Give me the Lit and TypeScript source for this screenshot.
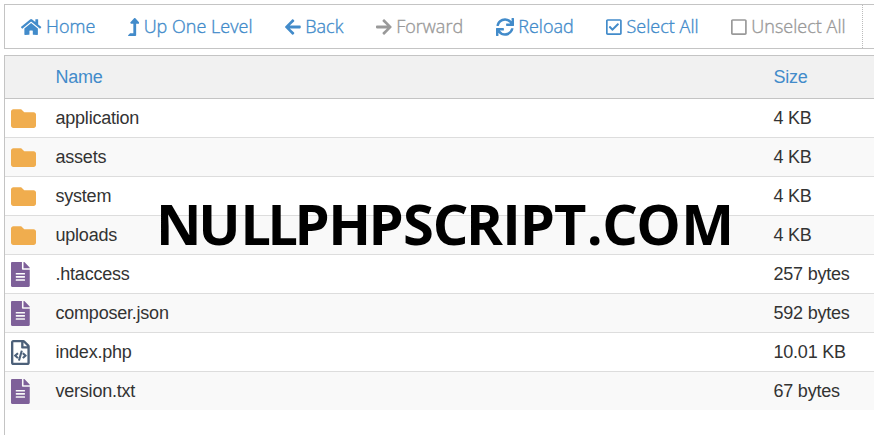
import { LitElement, html, svg, css } from "lit";
import { customElement } from "lit/decorators.js";
import { classMap } from "lit/directives/class-map.js";

type Glyph = { w: number; d: string };

const glyphs: Record<string, Glyph> = {
  home: { w: 576, d: "M280.37 148.26L96 300.11V464a16 16 0 0 0 16 16l112.06-.29a16 16 0 0 0 15.92-16V368a16 16 0 0 1 16-16h64a16 16 0 0 1 16 16v95.64a16 16 0 0 0 16 16.05L464 480a16 16 0 0 0 16-16V300L295.67 148.26a12.19 12.19 0 0 0-15.3 0zM571.6 251.47L488 182.56V44.05a12 12 0 0 0-12-12h-56a12 12 0 0 0-12 12v72.61L318.47 43a48 48 0 0 0-61 0L4.34 251.47a12 12 0 0 0-1.6 16.9l25.5 31A12 12 0 0 0 45.15 301l235.22-193.74a12.19 12.19 0 0 1 15.3 0L530.9 301a12 12 0 0 0 16.9-1.6l25.5-31a12 12 0 0 0-1.7-16.93z" },
  up: { w: 320, d: "M313.553 119.669L209.587 7.666c-9.485-10.214-25.676-10.229-35.174 0L70.438 119.669C56.232 134.969 67.062 160 88.025 160H152v272H68.024a11.996 11.996 0 0 0-8.485 3.515l-56 56C-4.021 499.074 1.333 512 12.024 512H208c13.255 0 24-10.745 24-24V160h63.966c20.878 0 31.851-24.969 17.587-40.331z" },
  left: { w: 448, d: "M257.5 445.1l-22.2 22.2c-9.4 9.4-24.6 9.4-33.9 0L7 273c-9.4-9.4-9.4-24.6 0-33.9L201.4 44.7c9.4-9.4 24.6-9.4 33.9 0l22.2 22.2c9.5 9.5 9.3 25-.4 34.3L136.6 216H424c13.3 0 24 10.7 24 24v32c0 13.3-10.7 24-24 24H136.6l120.5 114.8c9.8 9.3 10 24.8.4 34.3z" },
  right: { w: 448, d: "M190.5 66.9l22.2-22.2c9.4-9.4 24.6-9.4 33.9 0L441 239c9.4 9.4 9.4 24.6 0 33.9L246.6 467.3c-9.4 9.4-24.6 9.4-33.9 0l-22.2-22.2c-9.5-9.5-9.3-25 .4-34.3L311.4 296H24c-13.3 0-24-10.7-24-24v-32c0-13.3 10.7-24 24-24h287.4L190.9 101.2c-9.8-9.3-10-24.8-.4-34.3z" },
  sync: { w: 512, d: "M440.65 12.57l4 82.77A247.16 247.16 0 0 0 255.83 8C134.73 8 33.91 94.92 12.29 209.82A12 12 0 0 0 24.09 224h49.05a12 12 0 0 0 11.67-9.26 175.91 175.91 0 0 1 317-56.94l-101.46-4.86a12 12 0 0 0-12.57 12v47.41a12 12 0 0 0 12 12H500a12 12 0 0 0 12-12V12a12 12 0 0 0-12-12h-47.37a12 12 0 0 0-11.98 12.57zM255.83 432a175.61 175.61 0 0 1-146-77.8l101.8 4.87a12 12 0 0 0 12.57-12v-47.4a12 12 0 0 0-12-12H12a12 12 0 0 0-12 12V500a12 12 0 0 0 12 12h47.35a12 12 0 0 0 12-12.6l-4.15-82.57A247.17 247.17 0 0 0 255.83 504c121.11 0 221.93-86.92 243.55-201.82a12 12 0 0 0-11.8-14.18h-49.05a12 12 0 0 0-11.67 9.26A175.86 175.86 0 0 1 255.83 432z" },
  checked: { w: 448, d: "M400 32H48C21.49 32 0 53.49 0 80v352c0 26.51 21.49 48 48 48h352c26.51 0 48-21.49 48-48V80c0-26.51-21.49-48-48-48zm0 400H48V80h352v352zm-35.864-241.724L191.547 361.48c-4.705 4.667-12.303 4.637-16.97-.068l-90.781-91.516c-4.667-4.705-4.637-12.303.069-16.971l22.719-22.536c4.705-4.667 12.303-4.637 16.97.069l59.792 60.277 141.352-140.216c4.705-4.667 12.303-4.637 16.97.068l22.536 22.718c4.667 4.706 4.637 12.304-.068 16.971z" },
  unchecked: { w: 448, d: "M400 32H48C21.5 32 0 53.5 0 80v352c0 26.5 21.5 48 48 48h352c26.5 0 48-21.5 48-48V80c0-26.5-21.5-48-48-48zm-6 400H54c-3.3 0-6-2.7-6-6V86c0-3.3 2.7-6 6-6h340c3.3 0 6 2.7 6 6v340c0 3.3-2.7 6-6 6z" },
  folder: { w: 512, d: "M464 128H272l-64-64H48C21.49 64 0 85.49 0 112v288c0 26.51 21.49 48 48 48h416c26.51 0 48-21.49 48-48V176c0-26.51-21.49-48-48-48z" },
  text: { w: 384, d: "M224 136V0H24C10.7 0 0 10.7 0 24v464c0 13.3 10.7 24 24 24h336c13.3 0 24-10.7 24-24V160H248c-13.2 0-24-10.8-24-24zm64 236c0 6.6-5.4 12-12 12H108c-6.6 0-12-5.4-12-12v-8c0-6.6 5.4-12 12-12h168c6.6 0 12 5.4 12 12v8zm0-64c0 6.6-5.4 12-12 12H108c-6.6 0-12-5.4-12-12v-8c0-6.6 5.4-12 12-12h168c6.6 0 12 5.4 12 12v8zm0-72v8c0 6.6-5.4 12-12 12H108c-6.6 0-12-5.4-12-12v-8c0-6.6 5.4-12 12-12h168c6.6 0 12 5.4 12 12zm96-114.1v6.1H256V0h6.1c6.4 0 12.5 2.5 17 7l97.9 98c4.5 4.5 7 10.6 7 16.9z" },
  code: { w: 384, d: "M149.9 349.1l-.2-.2-32.8-28.9 32.8-28.9c3.6-3.2 4-8.8.8-12.4l-.2-.2-17.4-18.6c-3.4-3.6-9-3.7-12.4-.4l-57.7 54.1c-3.7 3.5-3.7 9.4 0 12.8l57.7 54.1c1.6 1.5 3.8 2.4 6 2.4 2.4 0 4.8-1 6.4-2.8l17.4-18.6c3.3-3.5 3.1-9.1-.4-12.4zm220-251.2L286 14C277 5 264.8-.1 252.1-.1H48C21.5 0 0 21.5 0 48v416c0 26.5 21.5 48 48 48h288c26.5 0 48-21.5 48-48V131.9c0-12.7-5.1-25-14.1-34zM256 51.9l76.1 76.1H256zM336 464H48V48h160v104c0 13.3 10.7 24 24 24h104zM209.6 214c-4.7-1.4-9.5 1.3-10.9 6L144 408.1c-1.4 4.7 1.3 9.6 6 10.9l24.4 7.1c4.7 1.4 9.6-1.4 10.9-6L240 231.9c1.4-4.7-1.3-9.6-6-10.9zm24.5 76.9.2.2 32.8 28.9-32.8 28.9c-3.6 3.2-4 8.8-.8 12.4l.2.2 17.4 18.6c3.3 3.5 8.9 3.7 12.4.4l57.7-54.1c3.7-3.5 3.7-9.4 0-12.8l-57.7-54.1c-3.5-3.3-9.1-3.2-12.4.4l-17.4 18.6c-3.3 3.5-3.1 9.1.4 12.4z" },
};

const actions = [
  { icon: "home", label: "Home" },
  { icon: "up", label: "Up One Level" },
  { icon: "left", label: "Back" },
  { icon: "right", label: "Forward", off: true },
  { icon: "sync", label: "Reload" },
  { icon: "checked", label: "Select All" },
  { icon: "unchecked", label: "Unselect All", off: true },
];

const files = [
  { kind: "folder", name: "application", size: "4 KB" },
  { kind: "folder", name: "assets", size: "4 KB" },
  { kind: "folder", name: "system", size: "4 KB" },
  { kind: "folder", name: "uploads", size: "4 KB" },
  { kind: "text", name: ".htaccess", size: "257 bytes" },
  { kind: "text", name: "composer.json", size: "592 bytes" },
  { kind: "code", name: "index.php", size: "10.01 KB" },
  { kind: "text", name: "version.txt", size: "67 bytes" },
];

// Pen position of each watermark letter.
const letterX = "10 52.3 95.2 122.2 148.5 182.2 222.5 257 286.8 320 356.3 373.7 408 440.7 456.3 490.3 535.3";

const icon = (name: string) => {
  const g = glyphs[name];
  return html`<svg class="icon ${name}" viewBox="0 0 ${g.w} 512">${svg`<path d=${g.d}></path>`}</svg>`;
};

@customElement("app-root")
export class AppRoot extends LitElement {
  static styles = css`
    :host {
      display: block;
      position: relative;
      box-sizing: border-box;
      height: 435px;
      padding: 4px 0 0 4px;
      overflow: hidden;
      background: #fff;
      color: #333;
      font: 18px/38px "Liberation Sans", Arial, sans-serif;
    }
    .icon { display: block; flex: none; fill: currentColor; }
    .toolbar {
      display: flex;
      box-sizing: border-box;
      height: 45px;
      border: 1px solid #c4c4c4;
      border-right: 0;
      font-family: "Open Sans", sans-serif;
      font-size: 18px;
      font-weight: 300;
      letter-spacing: 0.02px;
      color: #428bca;
    }
    .action {
      display: flex;
      align-items: center;
      gap: 4.5px;
      padding: 0 16.25px;
      white-space: nowrap;
      -webkit-text-stroke: 0.35px currentColor;
    }
    .action .icon { height: 18px; }
    .action span { margin-top: -1px; }
    .action.off { color: #999; }
    .action:last-child { border-right: 1px dotted #bbb; }
    .table {
      box-sizing: border-box;
      height: 380px;
      margin-top: 6px;
      border: 1px solid #c4c4c4;
      border-width: 1px 0 0 1px;
      letter-spacing: -0.22px;
    }
    .row {
      display: grid;
      grid-template-columns: 50.5px 718px 1fr;
      align-items: center;
      box-sizing: border-box;
      height: 39px;
      border-bottom: 1px solid #ddd;
    }
    .row:nth-child(odd) { background: #f9f9f9; }
    .row:last-child { height: 38px; border-bottom: 0; }
    .row.head {
      height: 43px;
      background: #f1f1f1;
      border-bottom: 1px solid #c4c4c4;
      color: #428bca;
    }
    .row .icon { height: 25px; margin-left: 6px; }
    .folder { color: #f0ad4e; }
    .text { color: #7e6099; }
    .code { color: #4c6079; }
    .watermark {
      position: absolute;
      left: 146px;
      top: 170px;
      width: 620px;
      height: 110px;
      fill: #000;
      font: 700 56px "Open Sans", sans-serif;
    }
    .narrow { font: 900 55px Lato, sans-serif; }
  `;

  render() {
    return html`
      <nav class="toolbar">
        ${actions.map(
          (a) => html`<a class=${classMap({ action: true, off: !!a.off })}>${icon(a.icon)}<span>${a.label}</span></a>`,
        )}
      </nav>
      <section class="table">
        <div class="row head"><span></span><span>Name</span><span>Size</span></div>
        ${files.map((f) => html`<div class="row">${icon(f.kind)}<span>${f.name}</span><span>${f.size}</span></div>`)}
      </section>
      <svg class="watermark"><text x=${letterX} y="75">NU<tspan class="narrow">LL</tspan>PHPSCRIPT.COM</text></svg>
    `;
  }
}
